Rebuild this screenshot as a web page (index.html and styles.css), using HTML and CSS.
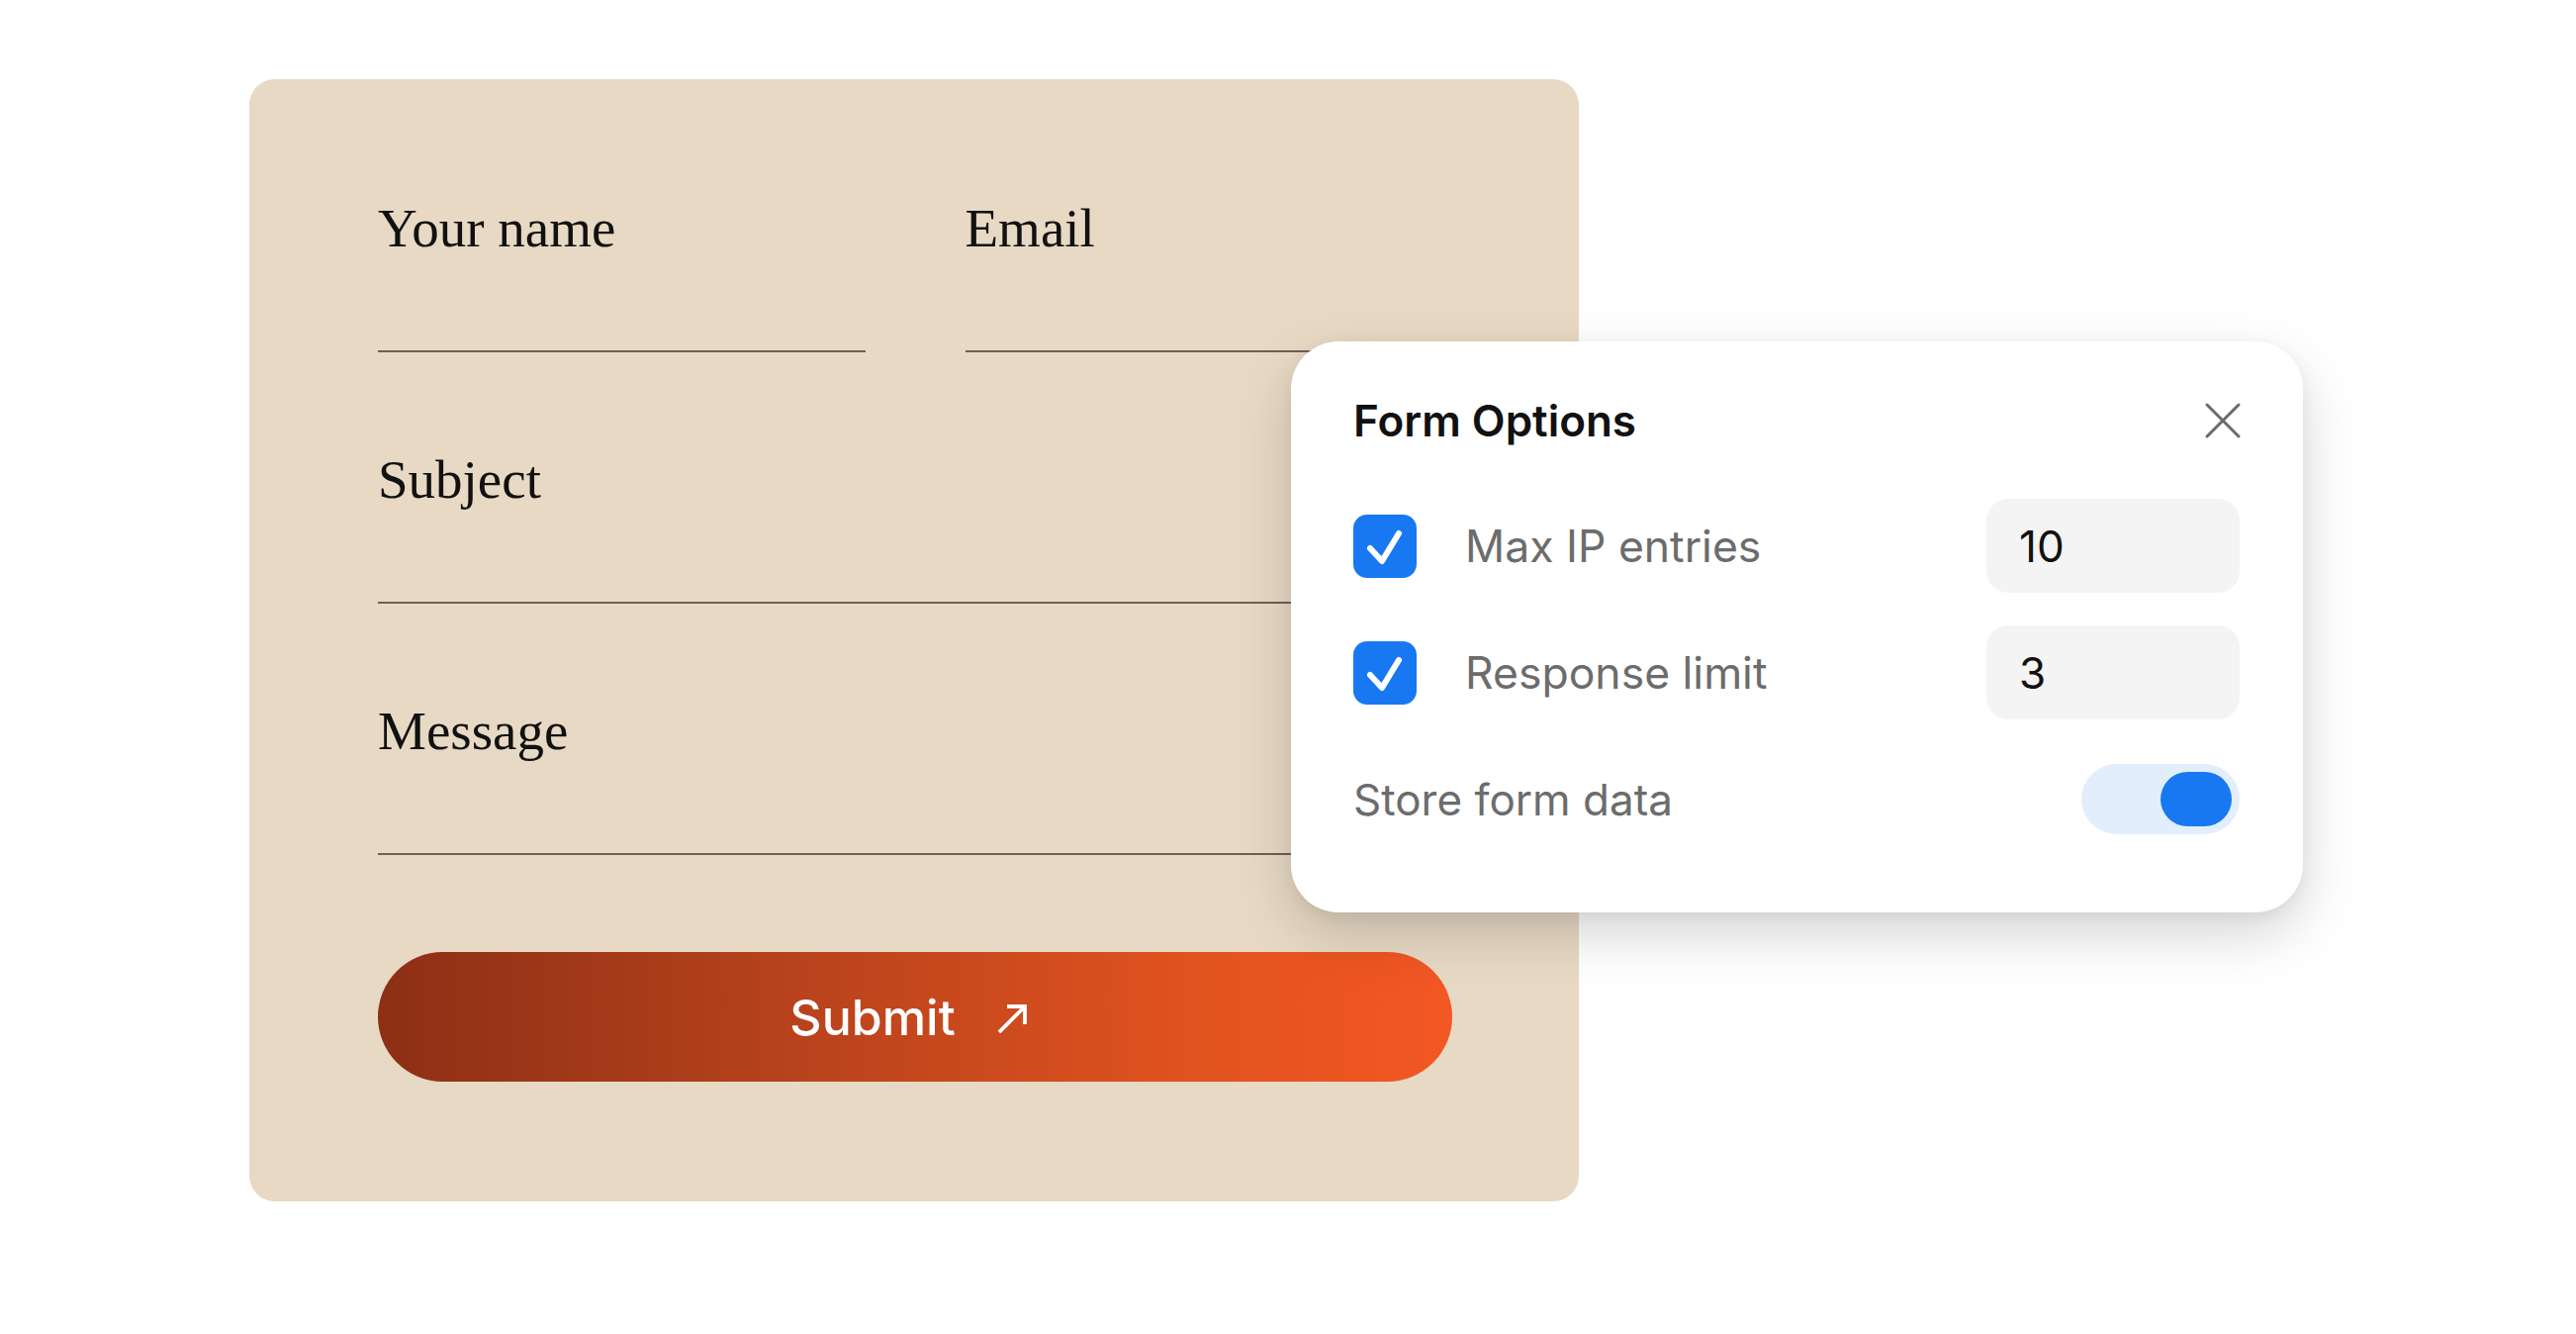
FILE: index.html
```html
<!DOCTYPE html>
<html>
    <head>
        <meta charset="UTF-8">
        <title>Contact Form</title>
        <link rel="stylesheet" href="styles.css">
    </head>
    <body>
        <div class="stage">
            <div class="scene">
                <form class="card">
                    <div class="pair">
                        <div class="field">
                            <label>Your name</label>
                            <div class="line"></div>
                        </div>
                        <div class="field">
                            <label>Email</label>
                            <div class="line"></div>
                        </div>
                    </div>
                    <div class="field">
                        <label>Subject</label>
                        <div class="line"></div>
                    </div>
                    <div class="field">
                        <label>Message</label>
                        <div class="line"></div>
                    </div>
                    <button type="button" class="submit">
                        <span>Submit</span>
                        <svg width="30" height="30" viewBox="0 0 30 30" fill="none" stroke="#fff" stroke-width="3.8">
                            <path d="M2 29 L28 3"/>
                            <path d="M10 3 H28 V21"/>
                        </svg>
                    </button>
                </form>

                <div class="options">
                    <div class="options-head">
                        <h2>Form Options</h2>
                        <svg class="close" width="38" height="38" viewBox="0 0 38 38" fill="none" stroke="#6a6a6a" stroke-width="3" stroke-linecap="round">
                            <path d="M3 3 L35 35"/>
                            <path d="M35 3 L3 35"/>
                        </svg>
                    </div>
                    <div class="opt">
                        <span class="check">
                            <svg width="64" height="64" viewBox="0 0 64 64" fill="none" stroke="#fff" stroke-width="6" stroke-linecap="round" stroke-linejoin="round">
                                <path d="M17 34 L29 47 L46 19"/>
                            </svg>
                        </span>
                        <span class="opt-label">Max IP entries</span>
                        <div class="num">10</div>
                    </div>
                    <div class="opt">
                        <span class="check">
                            <svg width="64" height="64" viewBox="0 0 64 64" fill="none" stroke="#fff" stroke-width="6" stroke-linecap="round" stroke-linejoin="round">
                                <path d="M17 34 L29 47 L46 19"/>
                            </svg>
                        </span>
                        <span class="opt-label">Response limit</span>
                        <div class="num">3</div>
                    </div>
                    <div class="opt">
                        <span class="opt-label plain">Store form data</span>
                        <div class="toggle"><span class="knob"></span></div>
                    </div>
                </div>
            </div>
        </div>
    </body>
</html>
```

FILE: styles.css
```css
body{
    margin: 0;
    background: #ffffff;
    font-family: "Inter", "Noto Sans", sans-serif;
}
.stage{
    padding: 80px 0 0 252px;
}
.scene{
    position: relative;
    width: 1344px;
}
.card{
    box-sizing: border-box;
    width: 1344px;
    height: 1134px;
    background: #e7d9c4;
    border-radius: 26px;
    padding: 120px 128px 120px 130px;
    display: flex;
    flex-direction: column;
    gap: 98px;
}
.pair{
    display: grid;
    grid-template-columns: 1fr 1fr;
    gap: 101px;
}
.field label{
    display: block;
    font-family: "Liberation Serif", "Times New Roman", serif;
    font-size: 55px;
    line-height: 61px;
    color: #111;
}
.field .line{
    height: 93px;
    border-bottom: 2px solid #6b6253;
}
.submit{
    height: 131px;
    border: none;
    border-radius: 66px;
    background: linear-gradient(to right, #8c2f15, #b9431c 40%, #e0521f 75%, #f35724);
    color: #fff;
    font-family: "Inter", sans-serif;
    font-size: 50px;
    font-weight: 500;
    display: flex;
    align-items: center;
    justify-content: center;
    gap: 42px;
    padding: 0 14px 0 0;
}
.submit svg{
    margin-top: 2px;
}

/* popup */
.options{
    position: absolute;
    left: 1053px;
    top: 265px;
    box-sizing: border-box;
    width: 1023px;
    background: #fff;
    border-radius: 48px;
    padding: 55px 64px 67px 63px;
    box-shadow: 0 22px 56px rgba(0,0,0,0.17), 0 4px 14px rgba(0,0,0,0.05);
    display: flex;
    flex-direction: column;
    gap: 33px;
}
.options-head{
    height: 50px;
    display: flex;
    align-items: center;
    justify-content: space-between;
    margin-bottom: 21px;
}
.options-head h2{
    margin: 0;
    font-size: 44px;
    font-weight: 600;
    color: #111;
}
.close{
    margin-right: -2px;
}
.opt{
    height: 95px;
    display: flex;
    align-items: center;
}
.check{
    width: 64px;
    height: 64px;
    border-radius: 14px;
    background: #1778f2;
    display: flex;
}
.opt-label{
    margin-left: 49px;
    font-size: 44.5px;
    color: #6c6c6c;
}
.opt-label.plain{
    margin-left: 0;
    font-size: 44px;
}
.num{
    margin-left: auto;
    box-sizing: border-box;
    width: 256px;
    height: 95px;
    border-radius: 22px;
    background: #f4f4f4;
    padding-left: 33px;
    display: flex;
    align-items: center;
    font-size: 44px;
    color: #111;
}
.toggle{
    margin-left: auto;
    box-sizing: border-box;
    width: 160px;
    height: 71px;
    border-radius: 36px;
    background: #e3eefd;
    padding: 8px;
    display: flex;
    justify-content: flex-end;
}
.knob{
    width: 72px;
    height: 55px;
    border-radius: 28px;
    background: #1778f2;
}
```
